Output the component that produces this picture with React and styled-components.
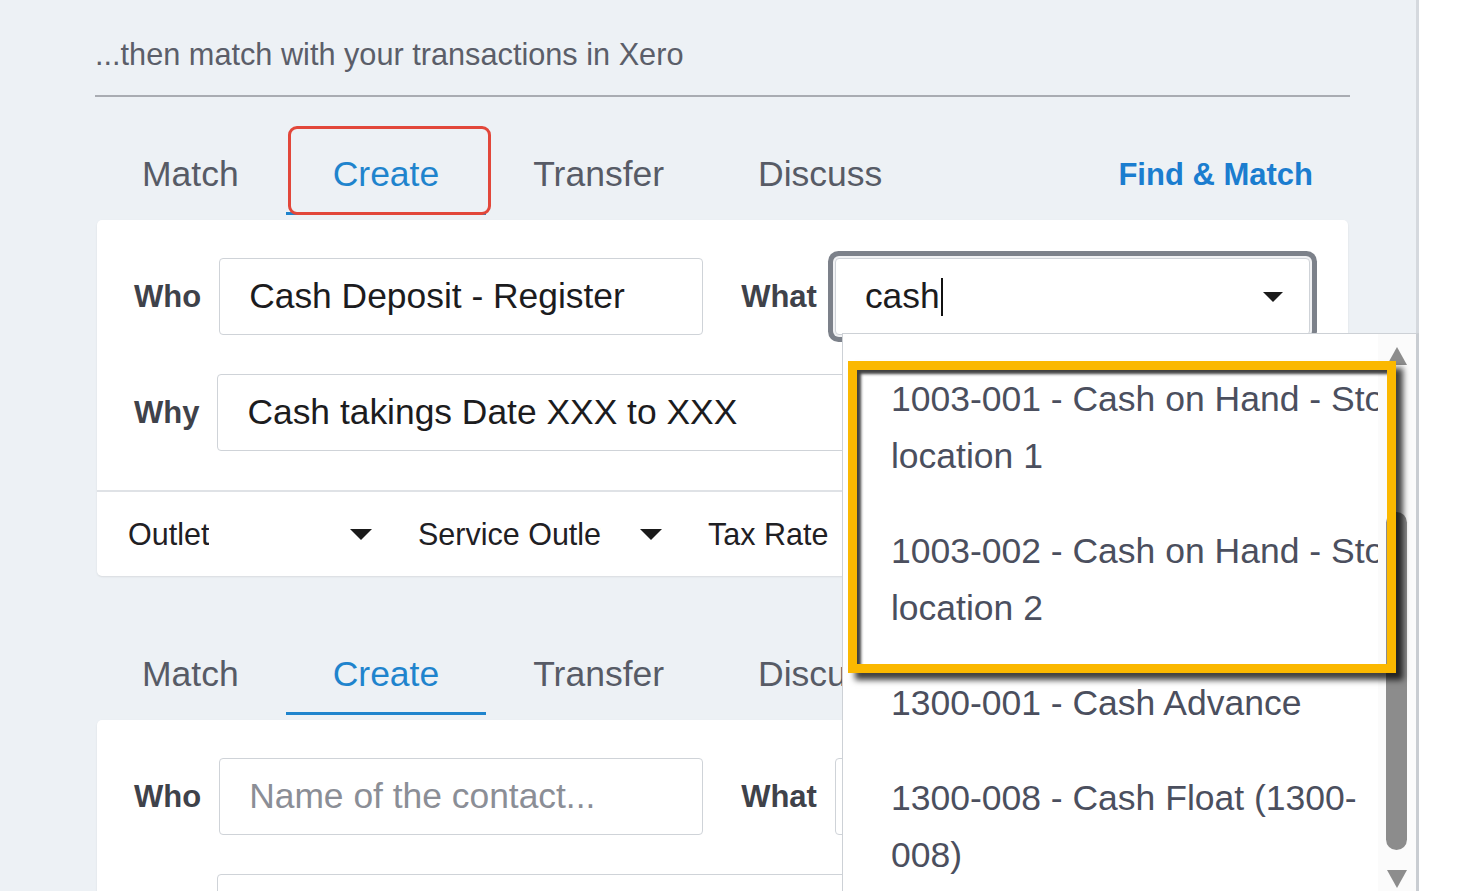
import React from "react";
import styled, { createGlobalStyle } from "styled-components";

const GlobalStyle = createGlobalStyle`
  html, body { margin: 0; padding: 0; height: 100%; overflow: hidden; background: #ffffff; }
  body { font-family: "Liberation Sans", Arial, sans-serif; }
  #root { height: 100%; }
`;

const Screen = styled.div`
  display: flex;
  height: 891px;
  overflow: hidden;
  background: #ffffff;
`;

const Panel = styled.div`
  width: 1419px;
  flex-shrink: 0;
  box-sizing: border-box;
  background: #edf1f5;
  border-right: 3px solid #d5d9de;
  padding: 38px 0 0 95px;
`;

const Column = styled.div`
  width: 1255px;
`;

const Intro = styled.div`
  font-size: 30.7px;
  line-height: 33px;
  color: #5b5e69;
  padding-bottom: 24px;
  border-bottom: 2px solid #a9acb2;
`;

const Section = styled.section`
  margin-top: ${(p) => (p.$first ? "0" : "21px")};
`;

const TabBar = styled.div`
  display: flex;
  align-items: flex-end;
  height: 118px;
`;

const Tab = styled.div`
  position: relative;
  padding: 0 47px 18px;
  font-size: 35.5px;
  line-height: 40px;
  color: ${(p) => (p.$active ? "#1f84cd" : "#575b66")};
  border-bottom: 3px solid ${(p) => (p.$active ? "#1f84cd" : "transparent")};
`;

const HighlightBox = styled.div`
  position: absolute;
  left: 2px;
  bottom: -3px;
  width: 203px;
  height: 89px;
  box-sizing: border-box;
  border: 3px solid #e2473a;
  border-radius: 9px;
`;

const FindMatch = styled.div`
  margin-left: auto;
  margin-right: 37px;
  padding-bottom: 20px;
  font-size: 31px;
  line-height: 40px;
  font-weight: bold;
  color: #1b7dcf;
`;

const Card = styled.div`
  margin: 5px 2px 0;
  background: #ffffff;
  border-radius: 5px;
  box-shadow: 0 1px 2px rgba(0, 0, 0, 0.09);
`;

const CardBody = styled.div`
  display: flex;
  flex-direction: column;
  gap: 39px;
  padding: 38px 38px 39px 37px;
`;

const Row = styled.div`
  display: flex;
  align-items: center;
`;

const Label = styled.div`
  font-size: 31px;
  font-weight: bold;
  color: #3f424a;
  margin: 0 18px 0 ${(p) => (p.$spaced ? "38px" : "0")};
`;

const FieldWrap = styled.div`
  position: relative;
  flex: ${(p) => (p.$width ? `0 0 ${p.$width}px` : "1")};
`;

const Field = styled.div`
  display: flex;
  align-items: center;
  height: 77px;
  box-sizing: border-box;
  padding: 0 26px 0 29px;
  border: 1px solid #cfd3d8;
  border-radius: 4px;
  background: #ffffff;
  font-size: 35.4px;
  color: ${(p) => (p.$placeholder ? "#8b8e96" : "#1c1c1e")};
  white-space: nowrap;
  overflow: hidden;
  box-shadow: ${(p) =>
    p.$focused ? "0 0 0 2px #f1f2f4, 0 0 0 7px #7c818a" : "none"};
`;

const TextCaret = styled.span`
  display: inline-block;
  width: 2px;
  height: 38px;
  margin-left: 1px;
  background: #111111;
`;

const CaretDown = styled.span`
  flex-shrink: 0;
  margin-left: auto;
  width: 0;
  height: 0;
  border-left: ${(p) => p.$size}px solid transparent;
  border-right: ${(p) => p.$size}px solid transparent;
  border-top: ${(p) => p.$size}px solid #1a1a1a;
`;

const BottomRow = styled.div`
  display: flex;
  align-items: center;
  gap: 46px;
  height: 84px;
  padding-left: 31px;
  border-top: 2px solid #dfe2e6;
`;

const Select = styled.div`
  display: flex;
  align-items: center;
  width: 244px;
  flex-shrink: 0;
  font-size: 30.5px;
  color: #1f2024;
`;

const SelectText = styled.span`
  max-width: 183px;
  overflow: hidden;
  white-space: nowrap;
`;

const Dropdown = styled.div`
  position: absolute;
  z-index: 5;
  top: calc(100% - 2px);
  left: 7px;
  width: 577px;
  height: 563px;
  box-sizing: border-box;
  display: flex;
  background: #ffffff;
  border: 1px solid #cdd1d6;
  border-right: 3px solid #c9cdd2;
`;

const ListViewport = styled.div`
  flex: 1;
  overflow: hidden;
  padding-top: 18px;
`;

const Item = styled.div`
  width: 530px;
  padding: 19px 0 19px 48px;
  font-size: 35.5px;
  line-height: 57px;
  color: #4b4f5e;
`;

const Scrollbar = styled.div`
  flex: 0 0 38px;
  display: flex;
  flex-direction: column;
  align-items: center;
  background: #fbfbfb;
  padding-top: 13px;
`;

const ArrowUp = styled.div`
  width: 0;
  height: 0;
  border-left: 10.5px solid transparent;
  border-right: 10.5px solid transparent;
  border-bottom: 18px solid #8d8d8d;
`;

const ArrowDown = styled.div`
  margin-top: 20px;
  width: 0;
  height: 0;
  border-left: 10.5px solid transparent;
  border-right: 10.5px solid transparent;
  border-top: 18px solid #8d8d8d;
`;

const Thumb = styled.div`
  margin-top: 147px;
  width: 21px;
  height: 338px;
  border-radius: 11px;
  background: #8c8c8c;
`;

const YellowBox = styled.div`
  position: absolute;
  left: 5px;
  top: 27px;
  width: 548px;
  height: 312px;
  box-sizing: border-box;
  border: 9px solid #fbb800;
  box-shadow: 7px 7px 6px rgba(0, 0, 0, 0.75),
    inset 5px 5px 3px -1px rgba(30, 30, 30, 0.85);
`;

const accounts = [
  "1003-001 - Cash on Hand - Store location 1",
  "1003-002 - Cash on Hand - Store location 2",
  "1300-001 - Cash Advance",
  <>1300-008 - Cash Float (1300-<wbr />008)</>,
  "1300-010 - Cash Clearing",
];

function Tabs({ highlight }) {
  return (
    <TabBar>
      <Tab>Match</Tab>
      <Tab $active>
        Create
        {highlight && <HighlightBox />}
      </Tab>
      <Tab>Transfer</Tab>
      <Tab>Discuss</Tab>
      <FindMatch>Find &amp; Match</FindMatch>
    </TabBar>
  );
}

function AccountDropdown() {
  return (
    <Dropdown>
      <ListViewport>
        {accounts.map((a, i) => (
          <Item key={i}>{a}</Item>
        ))}
      </ListViewport>
      <Scrollbar>
        <ArrowUp />
        <Thumb />
        <ArrowDown />
      </Scrollbar>
      <YellowBox />
    </Dropdown>
  );
}

export default function App() {
  return (
    <>
      <GlobalStyle />
      <Screen>
        <Panel>
          <Column>
            <Intro>...then match with your transactions in Xero</Intro>

            <Section $first>
              <Tabs highlight />
              <Card>
                <CardBody>
                  <Row>
                    <Label>Who</Label>
                    <FieldWrap $width={484}>
                      <Field>Cash Deposit - Register</Field>
                    </FieldWrap>
                    <Label $spaced>What</Label>
                    <FieldWrap>
                      <Field $focused>
                        cash
                        <TextCaret />
                        <CaretDown $size={10} />
                      </Field>
                      <AccountDropdown />
                    </FieldWrap>
                  </Row>
                  <Row>
                    <Label>Why</Label>
                    <FieldWrap>
                      <Field>Cash takings Date XXX to XXX</Field>
                    </FieldWrap>
                  </Row>
                </CardBody>
                <BottomRow>
                  <Select>
                    <SelectText>Outlet</SelectText>
                    <CaretDown $size={11} />
                  </Select>
                  <Select>
                    <SelectText>Service Outlet</SelectText>
                    <CaretDown $size={11} />
                  </Select>
                  <Select>
                    <SelectText>Tax Rate</SelectText>
                    <CaretDown $size={11} />
                  </Select>
                </BottomRow>
              </Card>
            </Section>

            <Section>
              <Tabs />
              <Card>
                <CardBody>
                  <Row>
                    <Label>Who</Label>
                    <FieldWrap $width={484}>
                      <Field $placeholder>Name of the contact...</Field>
                    </FieldWrap>
                    <Label $spaced>What</Label>
                    <FieldWrap>
                      <Field>
                        <CaretDown $size={10} />
                      </Field>
                    </FieldWrap>
                  </Row>
                  <Row>
                    <Label>Why</Label>
                    <FieldWrap>
                      <Field $placeholder>Description</Field>
                    </FieldWrap>
                  </Row>
                </CardBody>
              </Card>
            </Section>
          </Column>
        </Panel>
      </Screen>
    </>
  );
}
